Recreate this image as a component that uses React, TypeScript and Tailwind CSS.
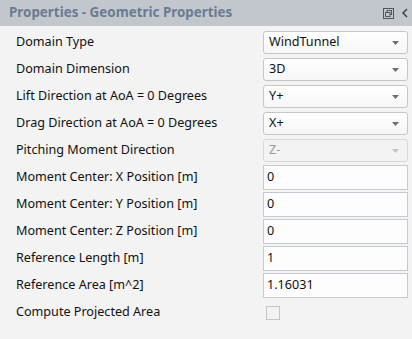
import React from "react";

type Row =
  | { label: string; kind: "select"; value: string; disabled?: boolean }
  | { label: string; kind: "text"; value: string }
  | { label: string; kind: "check" };

const rows: Row[] = [
  { label: "Domain Type", kind: "select", value: "WindTunnel" },
  { label: "Domain Dimension", kind: "select", value: "3D" },
  { label: "Lift Direction at AoA = 0 Degrees", kind: "select", value: "Y+" },
  { label: "Drag Direction at AoA = 0 Degrees", kind: "select", value: "X+" },
  { label: "Pitching Moment Direction", kind: "select", value: "Z-", disabled: true },
  { label: "Moment Center: X Position [m]", kind: "text", value: "0" },
  { label: "Moment Center: Y Position [m]", kind: "text", value: "0" },
  { label: "Moment Center: Z Position [m]", kind: "text", value: "0" },
  { label: "Reference Length [m]", kind: "text", value: "1" },
  { label: "Reference Area [m^2]", kind: "text", value: "1.16031" },
  { label: "Compute Projected Area", kind: "check" },
];

function Arrow({ disabled }: { disabled?: boolean }) {
  return (
    <svg width="7" height="4" viewBox="0 0 7 4" className="shrink-0">
      <path d="M0 0H7L3.5 4Z" fill={disabled ? "#c4c4c4" : "#6e6e6e"} />
    </svg>
  );
}

export default function App() {
  return (
    <div
      className="w-[412px] h-[339px] bg-[#f3f3f3] overflow-hidden"
      style={{ fontFamily: '"Noto Sans", "Open Sans", sans-serif' }}
    >
      <div className="h-[26px] bg-[#c2c7ce] flex items-center pl-[9px] pr-[4px]">
        <div className="text-[13.4px] font-bold text-[#6a7b91] flex-1 leading-none">
          Properties - Geometric Properties
        </div>
        <svg width="11" height="11" viewBox="0 0 11 11" className="mr-[8px]">
          <rect x="0.5" y="0.5" width="10" height="10" fill="none" stroke="#555" />
          <rect x="4" y="2.5" width="4.5" height="4" fill="none" stroke="#555" />
          <rect x="2.5" y="4.5" width="4.5" height="4" fill="#c2c7ce" stroke="#555" />
        </svg>
        <svg width="6" height="10" viewBox="0 0 6 10">
          <path d="M5 1L1 5L5 9" fill="none" stroke="#333" strokeWidth="1.3" />
        </svg>
      </div>
      <div className="pt-[3px]">
        {rows.map((r, i) => (
          <div key={i} className="h-[27px] flex items-center">
            <div className="w-[263px] pl-[16px] text-[12.6px] text-[#111] whitespace-nowrap">
              {r.label}
            </div>
            {r.kind === "select" && (
              <div
                className={`w-[145px] h-[23px] rounded-[3px] border flex items-center pl-[5px] pr-[8px] text-[12.6px] ${
                  r.disabled
                    ? "border-[#d8d8d8] bg-[#f3f3f3] text-[#9a9a9a]"
                    : "border-[#c6c6c6] bg-gradient-to-b from-[#ffffff] to-[#f6f6f6] text-[#111]"
                }`}
              >
                <span className="flex-1">{r.value}</span>
                <Arrow disabled={r.disabled} />
              </div>
            )}
            {r.kind === "text" && (
              <div className="w-[145px] h-[25px] border-[1.5px] border-[#c3cad6] bg-[#fdfdfd] flex items-center pl-[3px] text-[12.6px] text-[#111]">
                {r.value}
              </div>
            )}
            {r.kind === "check" && (
              <div className="ml-[3px] w-[14px] h-[14px] border border-[#c4c4c4] bg-[#f3f3f3]" />
            )}
          </div>
        ))}
      </div>
    </div>
  );
}
